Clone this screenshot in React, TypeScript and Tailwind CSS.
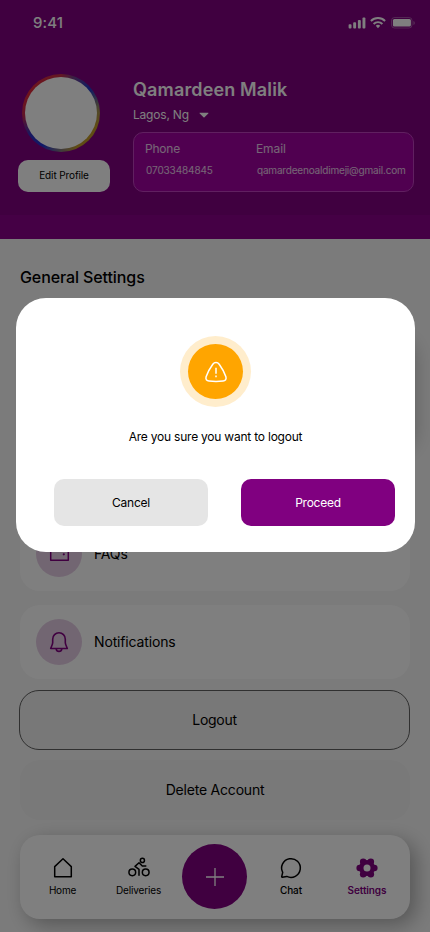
import React from "react";

function StatusIcons() {
  return (
    <svg width="68" height="14" viewBox="0 0 68 14" fill="white">
      <rect x="1.6" y="8.2" width="2.9" height="4.200" rx="0.9" />
      <rect x="6.200" y="6.2" width="2.9" height="6.200" rx="0.9" />
      <rect x="10.900" y="3.9" width="2.9" height="8.5" rx="0.9" />
      <rect x="15.500" y="1.6" width="2.9" height="10.8" rx="0.9" />
      <g fill="none" stroke="white" strokeWidth="1.9">
        <path d="M23.900 5a10 10 0 0 1 14.2 0" />
        <path d="M26.600 8a6.2 6.2 0 0 1 8.8 0" />
      </g>
      <path d="M28.800 9.8a3.300 3.300 0 0 1 4.400 0l-2.200 2.400z" />
      <rect x="44.500" y="1.500" width="20.500" height="10.500" rx="3" fill="none" stroke="white" strokeOpacity="0.3" />
      <rect x="45.900" y="3.100" width="18" height="7.400" rx="1.500" />
      <path d="M66.500 5v4c.8-.3 1.200-1.1 1.200-2s-.4-1.700-1.200-2z" fillOpacity="0.4" />
    </svg>
  );
}

function BellIcon() {
  return (
    <svg width="24" height="24" viewBox="0 0 24 24" fill="none" stroke="#800080" strokeWidth="1.6" strokeLinejoin="round">
      <path d="M5.700 9.200C5.700 5.500 8.500 2.800 12 2.800s6.300 2.700 6.300 6.400v3.200c0 2.200 1.200 3.700 2 6.100H3.700c.8-2.400 2-3.900 2-6.100V9.200Z" />
      <path d="M9.200 18.800c.2 1.500 1.300 2.600 2.800 2.600s2.600-1.100 2.800-2.600" />
    </svg>
  );
}

function WalletIcon() {
  return (
    <svg width="24" height="24" viewBox="0 0 24 24" fill="none" stroke="#800080" strokeWidth="1.5" strokeLinejoin="round">
      <path d="M3.700 4.500h14.500v3M3.700 4.500V18.200h17.600V7.500H3.700" />
      <circle cx="16.800" cy="12.300" r="1.100" fill="#800080" stroke="none" />
    </svg>
  );
}

function HomeIcon() {
  return (
    <svg width="24" height="24" viewBox="0 0 24 24" fill="none" stroke="black" strokeWidth="1.5" strokeLinejoin="round">
      <path d="M3.700 10.600 12 2.700l8.300 7.900v10.100H3.700Z" />
    </svg>
  );
}

function BikeIcon() {
  return (
    <svg width="24" height="24" viewBox="0 0 24 24" fill="none" stroke="black" strokeWidth="1.5" strokeLinejoin="round" strokeLinecap="round">
      <circle cx="5.300" cy="16.300" r="3.350" />
      <circle cx="18.700" cy="16.300" r="3.350" />
      <circle cx="15.400" cy="4.400" r="2.050" />
      <path d="M18.800 10h-3.500L12 6.800 8 10.400l4 3v5.900" />
    </svg>
  );
}

function ChatIcon() {
  return (
    <svg width="24" height="24" viewBox="0 0 24 24" fill="none" stroke="black" strokeWidth="1.5" strokeLinejoin="round">
      <path d="M3.700 16.400A9.350 9.350 0 1 1 7.800 20.400l-4.600.9a.5.5 0 0 1-.5-.6Z" />
    </svg>
  );
}

function SettingsIcon() {
  return (
    <svg width="24" height="24" viewBox="0 0 24 24" fill="#800080">
      <circle cx="12" cy="12" r="8" />
      <circle cx="4.700" cy="12" r="3.300" />
      <circle cx="19.300" cy="12" r="3.300" />
      <circle cx="8.200" cy="5.700" r="3.300" />
      <circle cx="15.800" cy="5.700" r="3.300" />
      <circle cx="8.200" cy="18.300" r="3.300" />
      <circle cx="15.800" cy="18.300" r="3.300" />
      <circle cx="12" cy="12" r="3.500" fill="white" />
    </svg>
  );
}

function WarningIcon() {
  return (
    <svg width="24" height="24" viewBox="0 0 24 24" fill="none" stroke="white" strokeWidth="1.5" strokeLinejoin="round">
      <path d="M8.800 4.300c1.700-2.400 4.700-2.400 6.400 0 2.700 3.700 5.300 8.200 6.700 12.500.7 2.500-.5 4-2.900 4.300-4.700.5-9.300.5-14 0-2.400-.3-3.600-1.800-2.900-4.300 1.400-4.300 4-8.800 6.700-12.500Z" />
      <path d="M12 7.800v6M12 15.600v1.700" />
    </svg>
  );
}

function Row({ icon, label }: { icon: React.ReactNode; label: string }) {
  return (
    <div className="flex h-[74px] items-center gap-3 rounded-[20px] bg-white pl-4">
      <div className="flex size-[46px] items-center justify-center rounded-full bg-[#e5cce5]">{icon}</div>
      <span className="text-[14px] leading-5 tracking-[-0.15px]">{label}</span>
    </div>
  );
}

function NavItem({ icon, label, className }: { icon: React.ReactNode; label: string; className: string }) {
  return (
    <div className={"flex flex-col items-center gap-[2px] text-[10px] leading-4 " + className}>
      {icon}
      <span>{label}</span>
    </div>
  );
}

export default function App() {
  return (
    <div className="relative h-[932px] w-[430px] overflow-hidden bg-[#f7f7f7] font-['Inter','Liberation_Sans',sans-serif] text-black">
      <header className="h-[239px] bg-[#8a008a]">
        <div className="h-[215px] bg-[#800080] text-white">
          <div className="flex h-[46px] items-center justify-between pr-[15px] pl-[33px]">
            <span className="text-[15px] leading-5 font-medium tracking-[0.1px]">9:41</span>
            <StatusIcons />
          </div>
          <div className="flex pt-7 pl-[18px]">
            <div className="w-[115px]">
              <div className="ml-1 size-[78px] rounded-full bg-[conic-gradient(from_0deg,#c83048_0deg,#70408a_20deg,#2038c8_50deg,#a09058_85deg,#c09828_110deg,#c09828_155deg,#807878_180deg,#2030d0_210deg,#3030c0_235deg,#c02850_265deg,#e02838_300deg,#c83048_360deg)] p-[3px]">
                <div className="size-full rounded-full bg-white" />
              </div>
              <button className="mt-2 flex h-8 w-[92px] items-center justify-center rounded-[10px] bg-white pb-px text-[10px] tracking-[-0.12px] text-black">
                Edit Profile
              </button>
            </div>
            <div>
              <h1 className="mt-1 text-[18px] leading-6 font-semibold tracking-[0.15px]">Qamardeen Malik</h1>
              <div className="mt-[3px] flex h-5 items-center gap-[10px] text-[12px] tracking-[-0.2px]">
                <span>Lagos, Ng</span>
                <svg width="10" height="6" viewBox="0 0 10 6" fill="white"><path d="M1 .8h8c.5 0 .6.4.3.700L5.500 5.200c-.3.300-.7.300-1 0L.7 1.500C.4 1.200.5.800 1 .8Z" /></svg>
              </div>
              <div className="mt-[7px] grid h-[60px] w-[281px] grid-cols-[111px_1fr] rounded-[10px] border border-[#c040c0] bg-[#a000a0] pt-[6px] pl-[11px] text-white/80">
                <div>
                  <div className="text-[12px] leading-5 tracking-[-0.2px]">Phone</div>
                  <div className="mt-[3px] pl-px text-[10px] leading-4 tracking-[-0.12px]">07033484845</div>
                </div>
                <div>
                  <div className="text-[12px] leading-5 tracking-[-0.1px]">Email</div>
                  <div className="mt-[3px] pl-px text-[10px] leading-4 tracking-[-0.19px]">qamardeenoaldimeji@gmail.com</div>
                </div>
              </div>
            </div>
          </div>
        </div>
      </header>

      <main className="px-5">
        <h2 className="pt-[26px] text-[16px] leading-6 font-medium tracking-[-0.1px]">General Settings</h2>
        <div className="mt-[40px] h-[116px] rounded-[20px] bg-white shadow-[8px_8px_20px_-4px_rgba(0,0,0,0.25)]" />
        <div className="mt-[72px] flex flex-col gap-[14px]">
          <Row icon={<WalletIcon />} label="FAQs" />
          <Row icon={<BellIcon />} label="Notifications" />
        </div>
        <button className="mt-[11px] -ml-px flex h-[60px] w-[391px] items-center justify-center rounded-[20px] border border-[#606060] bg-[#f0f0f0] pb-px text-[14px] tracking-[-0.3px]">
          Logout
        </button>
        <button className="mt-[10px] flex h-[60px] w-full items-center justify-center rounded-[20px] bg-[#f2f2f2] pb-px text-[14px] tracking-[-0.2px]">
          Delete Account
        </button>
      </main>

      <nav className="mx-5 mt-[15px] grid h-[84px] grid-cols-[85px_67px_85px_68px_84px] items-center rounded-[20px] bg-white shadow-[6px_6px_20px_rgba(0,0,0,0.3)]">
        <NavItem icon={<HomeIcon />} label="Home" className="tracking-[-0.2px]" />
        <NavItem icon={<BikeIcon />} label="Deliveries" className="tracking-[-0.15px]" />
        <button className="mx-auto mb-px flex size-[65px] items-center justify-center rounded-full bg-[#800080]">
          <svg width="20" height="20" viewBox="0 0 20 20" fill="none" stroke="white" strokeWidth="1.300"><path d="M10 1v18M1 10h18" /></svg>
        </button>
        <NavItem icon={<ChatIcon />} label="Chat" className="font-medium tracking-[-0.1px]" />
        <NavItem icon={<SettingsIcon />} label="Settings" className="font-semibold tracking-[-0.1px] text-[#800080]" />
      </nav>

      <div className="absolute inset-0 bg-black/50 px-4 pt-[298px]">
        <div role="dialog" className="flex h-[254px] w-[399px] flex-col items-center rounded-[30px] bg-white pt-[38px]">
          <div className="flex size-[71px] items-center justify-center rounded-full bg-[#ffedcc]">
            <div className="flex size-[55px] items-center justify-center rounded-full bg-[#ffa500]">
              <WarningIcon />
            </div>
          </div>
          <p className="mt-5 text-[12px] leading-5 tracking-[-0.22px]">Are you sure you want to logout</p>
          <div className="mt-8 flex gap-[33px] self-start pl-[38px] text-[12px] tracking-[-0.25px]">
            <button className="h-[47px] w-[154px] rounded-[10px] bg-[#e5e5e5]">Cancel</button>
            <button className="h-[47px] w-[154px] rounded-[10px] bg-[#800080] text-white">Proceed</button>
          </div>
        </div>
      </div>
    </div>
  );
}
